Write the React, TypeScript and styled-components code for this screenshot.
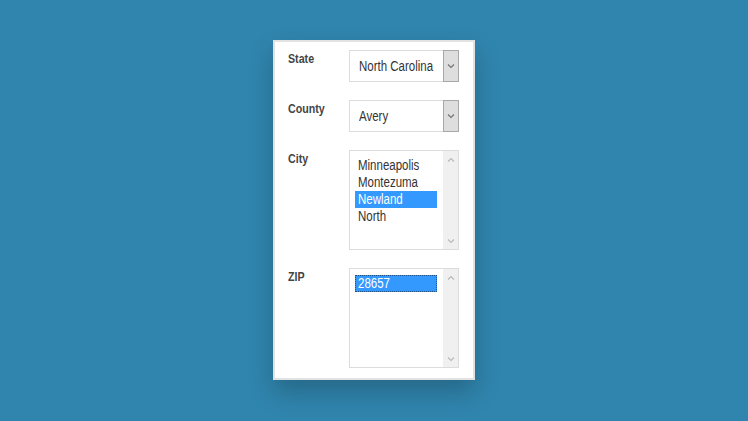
import React from "react";
import styled, { createGlobalStyle } from "styled-components";

const Global = createGlobalStyle`
  html, body { margin: 0; padding: 0; }
  body {
    background: #3085ae;
    font-family: "Liberation Sans", Arial, sans-serif;
  }
`;

const Page = styled.div`
  width: 748px;
  height: 421px;
  display: flex;
  justify-content: center;
  align-items: flex-start;
  padding-top: 40px;
  box-sizing: border-box;
`;

const Card = styled.div`
  width: 202px;
  height: 340px;
  box-sizing: border-box;
  background: #fff;
  border: 2px solid #e2e2e2;
  box-shadow: 0 12px 24px rgba(0, 0, 0, 0.22);
  padding: 8px 14px 0 13px;
  display: grid;
  grid-template-columns: 61px 110px;
  grid-auto-rows: auto;
  align-content: start;
  row-gap: 18px;
  align-items: start;
`;

/* The reference uses a narrow sans face; no narrow face is installed, so the
   regular face is compressed horizontally to the same advance widths. */
const Narrow = styled.span`
  display: inline-block;
  transform: scaleX(0.82);
  transform-origin: left center;
  white-space: nowrap;
`;

const Label = styled.div`
  font-size: 13px;
  font-weight: bold;
  color: #444;
  line-height: 16px;
  padding: 1px 0 0 0;
`;

const SelectBox = styled.div`
  height: 32px;
  box-sizing: border-box;
  border: 1px solid #dcdcdc;
  display: flex;
  align-items: stretch;
  background: #fff;
`;

const SelectText = styled.div`
  flex: 1;
  font-size: 14px;
  color: #333;
  display: flex;
  align-items: center;
  padding-left: 9px;
  overflow: hidden;
`;

const ArrowButton = styled.div`
  width: 16px;
  margin: -1px -1px -1px 0;
  box-sizing: border-box;
  border: 1px solid #a8a8a8;
  background: #dedede;
  display: flex;
  align-items: center;
  justify-content: center;
`;

const ListBox = styled.div`
  height: 100px;
  box-sizing: border-box;
  border: 1px solid #dcdcdc;
  display: flex;
  background: #fff;
`;

const Items = styled.div`
  flex: 1;
  padding: 6px 6px 0 5px;
  display: flex;
  flex-direction: column;
`;

const Item = styled.div<{ $selected?: boolean; $focused?: boolean }>`
  height: 17px;
  line-height: 17px;
  font-size: 14px;
  padding-left: 3px;
  box-sizing: border-box;
  color: ${(p) => (p.$selected ? "#fff" : "#333")};
  background: ${(p) => (p.$selected ? "#3399ff" : "transparent")};
  outline: ${(p) => (p.$focused ? "1px dotted #1a4f8a" : "none")};
  outline-offset: -1px;
`;

const ScrollTrack = styled.div`
  width: 15px;
  background: #f0f0f0;
  display: flex;
  flex-direction: column;
  justify-content: space-between;
  align-items: center;
  padding: 6px 0 5px;
`;

const Chevron = ({ dir, color }: { dir: "up" | "down"; color: string }) => (
  <svg width="8" height="6" viewBox="0 0 8 6">
    <path
      d={dir === "down" ? "M1 1.5 L4 4.5 L7 1.5" : "M1 4.5 L4 1.5 L7 4.5"}
      fill="none"
      stroke={color}
      strokeWidth="1.1"
    />
  </svg>
);

const Select = ({ value }: { value: string }) => (
  <SelectBox>
    <SelectText>
      <Narrow>{value}</Narrow>
    </SelectText>
    <ArrowButton>
      <Chevron dir="down" color="#707070" />
    </ArrowButton>
  </SelectBox>
);

const List = ({ items, selected, focused }: { items: string[]; selected: string; focused?: boolean }) => (
  <ListBox>
    <Items>
      {items.map((it) => (
        <Item key={it} $selected={it === selected} $focused={focused && it === selected}>
          <Narrow>{it}</Narrow>
        </Item>
      ))}
    </Items>
    <ScrollTrack>
      <Chevron dir="up" color="#b8b8b8" />
      <Chevron dir="down" color="#b8b8b8" />
    </ScrollTrack>
  </ListBox>
);

export default function App() {
  return (
    <>
      <Global />
      <Page>
        <Card>
          <Label><Narrow>State</Narrow></Label>
          <Select value="North Carolina" />
          <Label><Narrow>County</Narrow></Label>
          <Select value="Avery" />
          <Label><Narrow>City</Narrow></Label>
          <List items={["Minneapolis", "Montezuma", "Newland", "North"]} selected="Newland" />
          <Label><Narrow>ZIP</Narrow></Label>
          <List items={["28657"]} selected="28657" focused />
        </Card>
      </Page>
    </>
  );
}
